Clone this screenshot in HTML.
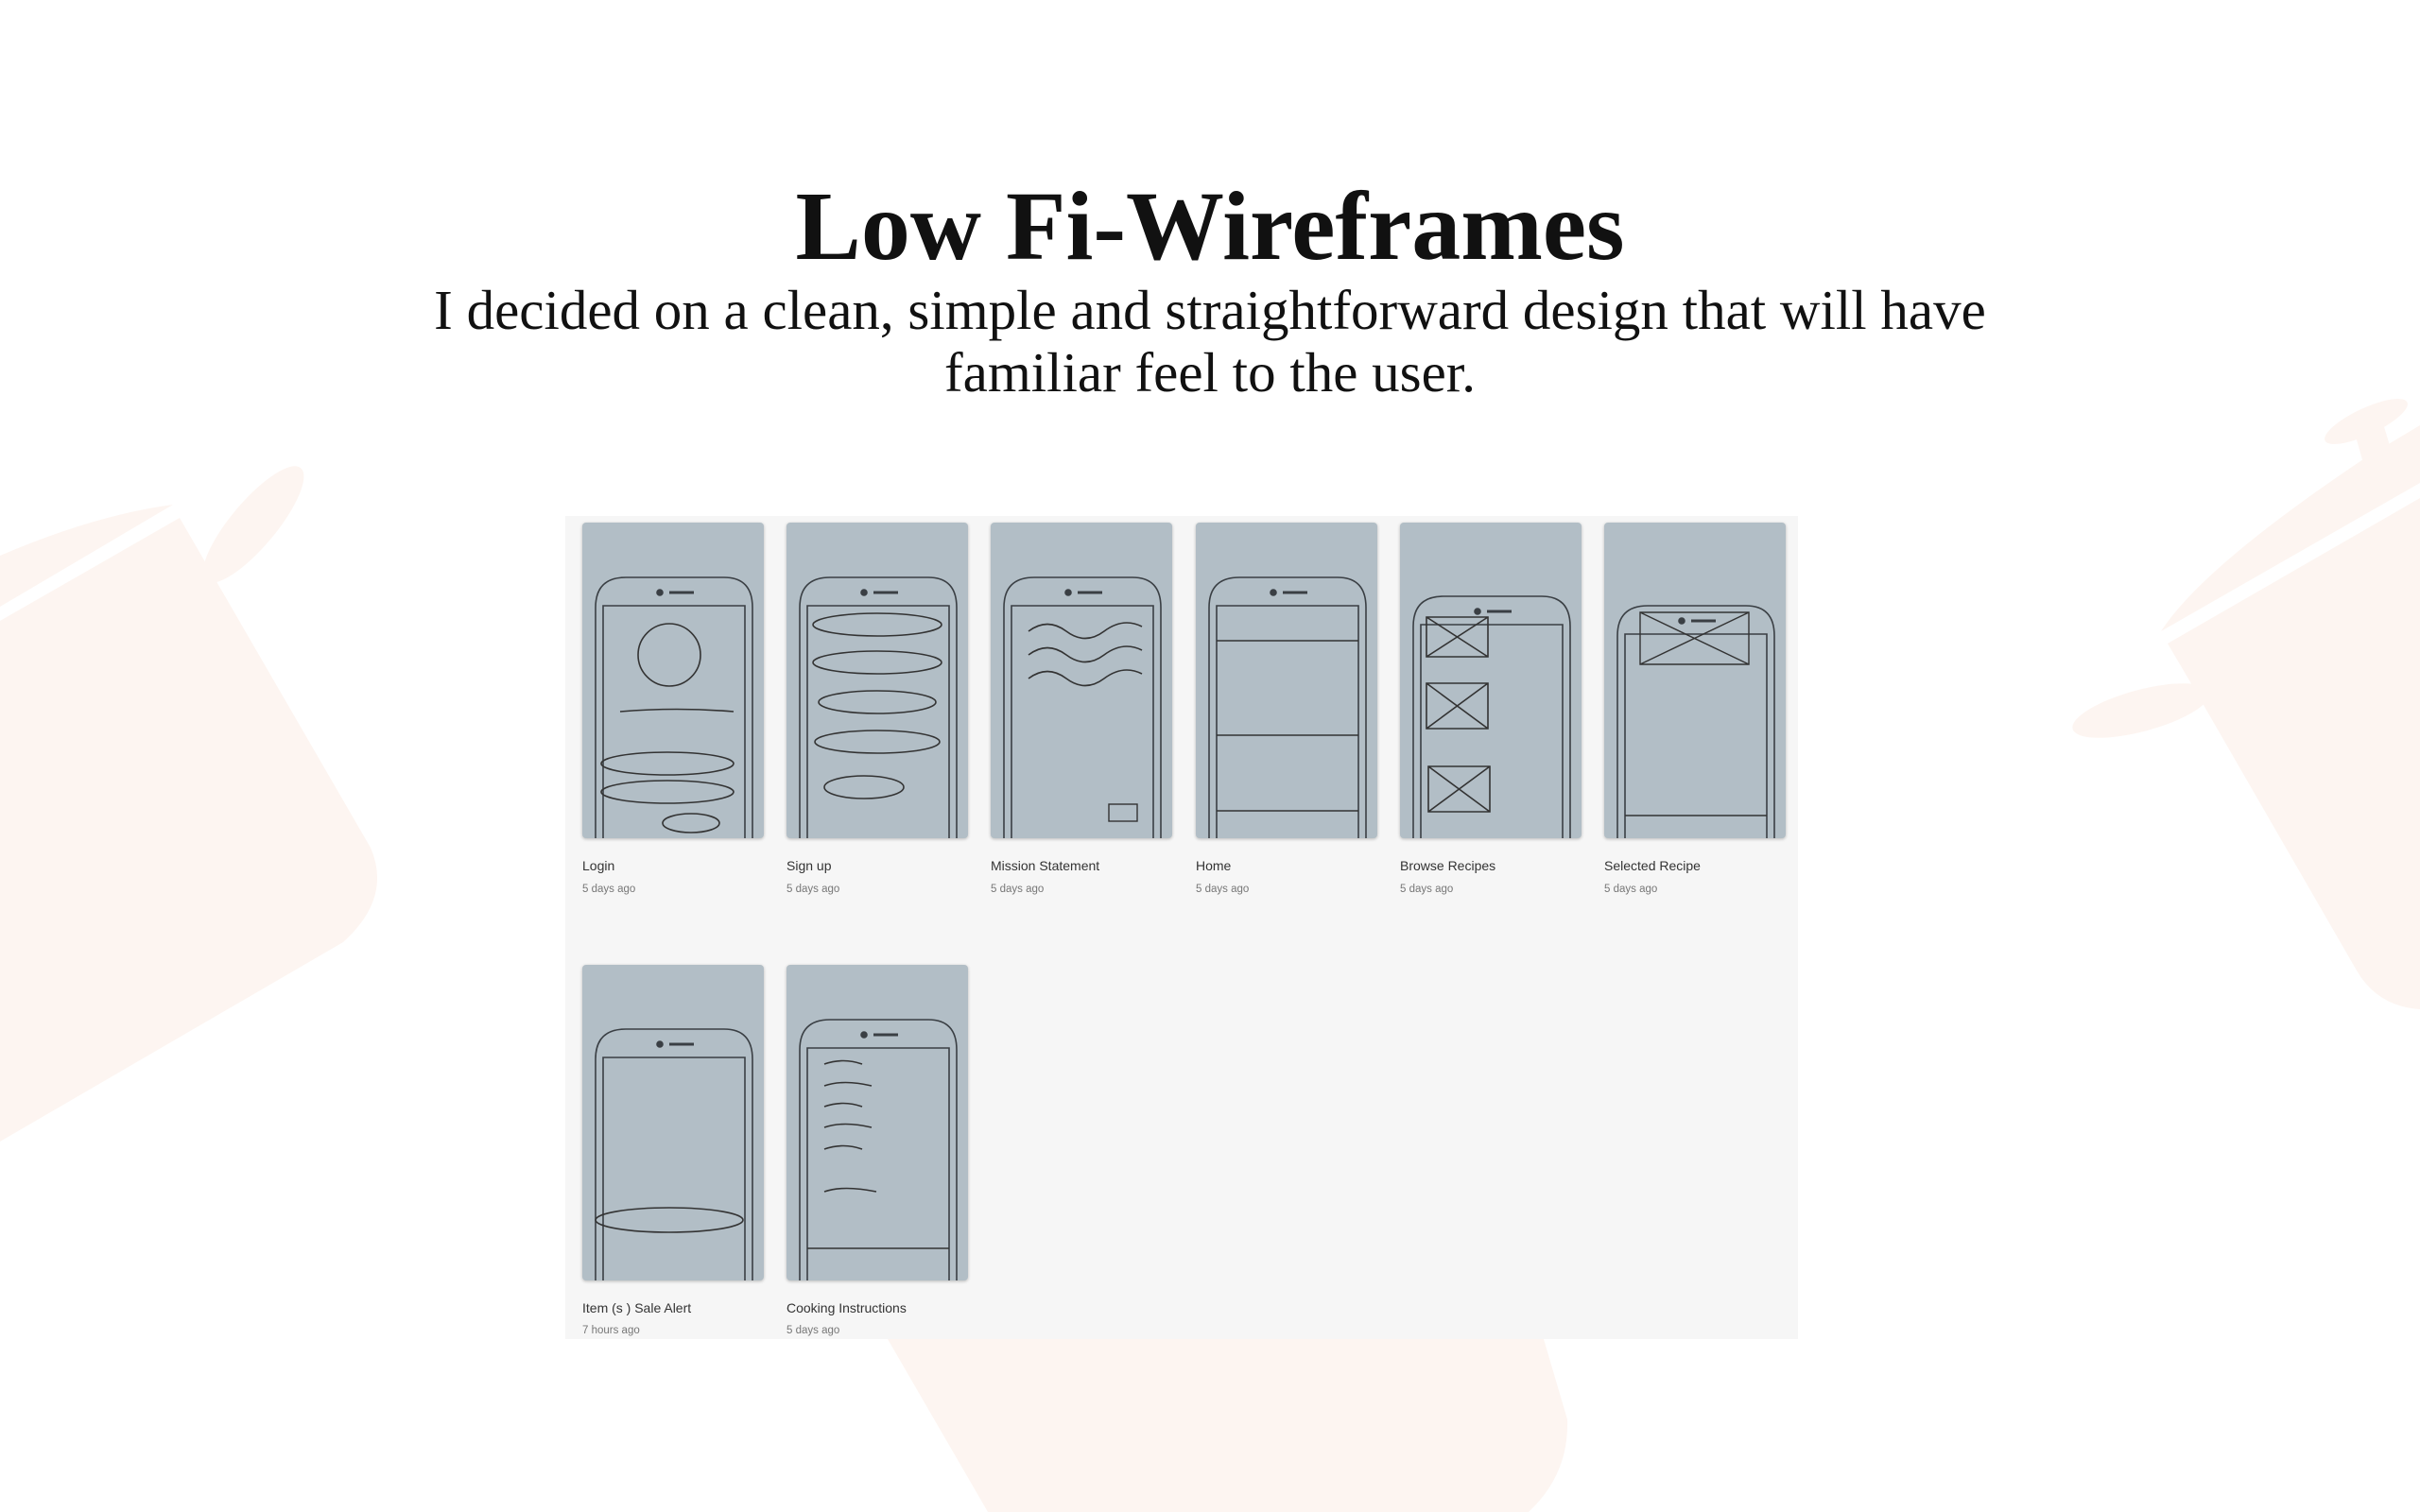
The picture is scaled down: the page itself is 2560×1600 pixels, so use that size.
<!DOCTYPE html>
<html><head><meta charset="utf-8"><style>
html,body{margin:0;padding:0;background:#fff;width:2560px;height:1600px;overflow:hidden;position:relative;font-family:"Liberation Serif",serif}
.bg{position:absolute;left:0;top:0}
h1{position:absolute;left:0;width:2560px;top:180px;margin:0;text-align:center;font-size:104px;font-weight:bold;color:#111;line-height:120px}
.sub{position:absolute;left:0;width:2560px;top:295px;text-align:center;font-size:59px;line-height:66px;color:#111}
.panel{position:absolute;left:598px;top:546px;width:1304px;height:871px;background:#f6f6f6}
.card{position:absolute;width:192px;height:334px;background:#b2bec6;border-radius:4px;box-shadow:0 1px 3px rgba(0,0,0,.25);overflow:hidden}
.lbl{position:absolute;font-family:"Liberation Sans",sans-serif;font-size:14px;color:#333}
.dt{position:absolute;font-family:"Liberation Sans",sans-serif;font-size:11.5px;color:#777}
</style></head><body>
<svg class="bg" width="2560" height="1600" viewBox="0 0 2560 1600">
<g fill="#fdf5f1">
<path d="M0 657 L190 548 L392 897 Q415 950 363 997 L0 1208 Z"/>
<path d="M0 588 Q100 545 183 534 L0 642 Z"/>
<ellipse cx="268" cy="555" rx="78" ry="24" transform="rotate(-50 268 555)"/>
<path d="M2293 681 L2560 527 L2560 1068 Q2515 1065 2493 1027 L2316 720 Z"/>
<ellipse cx="2265" cy="752" rx="75" ry="22" transform="rotate(-15 2265 752)"/>
<path d="M2286 668 Q2330 600 2500 486 L2560 450 L2560 511 Z"/>
<ellipse cx="2503" cy="446" rx="48" ry="14" transform="rotate(-25 2503 446)"/>
<path d="M2490 455 L2500 490 L2530 478 L2520 445 Z"/>
<path d="M939 1417 L1633 1417 L1658 1502 Q1660 1560 1617 1600 L1045 1600 Z"/>
</g>
</svg>
<h1>Low Fi-Wireframes</h1>
<div class="sub">I decided on a clean, simple and straightforward design that will have<br>familiar feel to the user.</div>
<div class="panel"></div>

<svg width="0" height="0" style="position:absolute"><defs>
<g id="ph" fill="none" stroke="#3a3f44" stroke-width="1.6">
<path d="M14 334 L14 90 Q14 58 46 58 L150 58 Q180 58 180 90 L180 334"/>
<path d="M22 334 L22 88 L172 88 L172 334"/>
<circle cx="82" cy="74" r="3" fill="#3a3f44"/>
<path d="M92 74 L118 74" stroke-width="3"/>
</g></defs></svg>

<div class="card" style="left:616px;top:553px"><svg width="192" height="334"><use href="#ph"/><circle cx="92" cy="140" r="33" fill="none" stroke="#333" stroke-width="1.6"/><path d="M40 200 Q100 195 160 200" stroke="#333" fill="none" stroke-width="1.6"/><ellipse cx="90" cy="255" rx="70" ry="12" fill="none" stroke="#333" stroke-width="1.6"/><ellipse cx="90" cy="285" rx="70" ry="12" fill="none" stroke="#333" stroke-width="1.6"/><ellipse cx="115" cy="318" rx="30" ry="10" fill="none" stroke="#333" stroke-width="1.6"/></svg></div>
<div class="lbl" style="left:616px;top:908px">Login</div><div class="dt" style="left:616px;top:935px">5 days ago</div>

<div class="card" style="left:832px;top:553px"><svg width="192" height="334"><use href="#ph"/><g fill="none" stroke="#333" stroke-width="1.6"><ellipse cx="96" cy="108" rx="68" ry="12"/><ellipse cx="96" cy="148" rx="68" ry="12"/><ellipse cx="96" cy="190" rx="62" ry="12"/><ellipse cx="96" cy="232" rx="66" ry="12"/><ellipse cx="82" cy="280" rx="42" ry="12"/></g></svg></div>
<div class="lbl" style="left:832px;top:908px">Sign up</div><div class="dt" style="left:832px;top:935px">5 days ago</div>

<div class="card" style="left:1048px;top:553px"><svg width="192" height="334"><use href="#ph"/><path d="M40 115 Q60 100 80 115 T120 115 T160 110 M40 140 Q60 125 80 140 T120 140 T160 135 M40 165 Q60 150 80 165 T120 165 T160 160" fill="none" stroke="#333" stroke-width="1.6"/><rect x="125" y="298" width="30" height="18" fill="none" stroke="#333" stroke-width="1.4"/></svg></div>
<div class="lbl" style="left:1048px;top:908px">Mission Statement</div><div class="dt" style="left:1048px;top:935px">5 days ago</div>

<div class="card" style="left:1265px;top:553px"><svg width="192" height="334"><use href="#ph"/><path d="M22 125 L172 125 M22 225 L172 225 M22 305 L172 305" stroke="#333" stroke-width="1.6"/></svg></div>
<div class="lbl" style="left:1265px;top:908px">Home</div><div class="dt" style="left:1265px;top:935px">5 days ago</div>

<div class="card" style="left:1481px;top:553px"><svg width="192" height="334"><use href="#ph" transform="translate(0,20)"/><g fill="none" stroke="#333" stroke-width="1.6"><path d="M28 100h65v42h-65z M28 100l65 42 M93 100l-65 42 M28 170h65v48h-65z M28 170l65 48 M93 170l-65 48 M30 258h65v48h-65z M30 258l65 48 M95 258l-65 48"/></g></svg></div>
<div class="lbl" style="left:1481px;top:908px">Browse Recipes</div><div class="dt" style="left:1481px;top:935px">5 days ago</div>

<div class="card" style="left:1697px;top:553px"><svg width="192" height="334"><use href="#ph" transform="translate(0,30)"/><g fill="none" stroke="#333" stroke-width="1.4"><path d="M38 95h115v55h-115z M38 95l115 55 M153 95l-115 55 M22 310h150"/></g></svg></div>
<div class="lbl" style="left:1697px;top:908px">Selected Recipe</div><div class="dt" style="left:1697px;top:935px">5 days ago</div>

<div class="card" style="left:616px;top:1021px;height:334px"><svg width="192" height="334"><use href="#ph" transform="translate(0,10)"/><ellipse cx="92" cy="270" rx="78" ry="13" fill="none" stroke="#333" stroke-width="1.6"/></svg></div>
<div class="lbl" style="left:616px;top:1376px">Item (s ) Sale Alert</div><div class="dt" style="left:616px;top:1402px">7 hours ago</div>

<div class="card" style="left:832px;top:1021px;height:334px"><svg width="192" height="334"><use href="#ph"/><path d="M40 105 Q60 98 80 105 M40 128 Q60 121 90 128 M40 150 Q60 143 80 150 M40 172 Q60 165 90 172 M40 195 Q60 188 80 195 M40 240 Q60 233 95 240 M22 300 L172 300" fill="none" stroke="#333" stroke-width="1.6"/></svg></div>
<div class="lbl" style="left:832px;top:1376px">Cooking Instructions</div><div class="dt" style="left:832px;top:1402px">5 days ago</div>
</body></html>
